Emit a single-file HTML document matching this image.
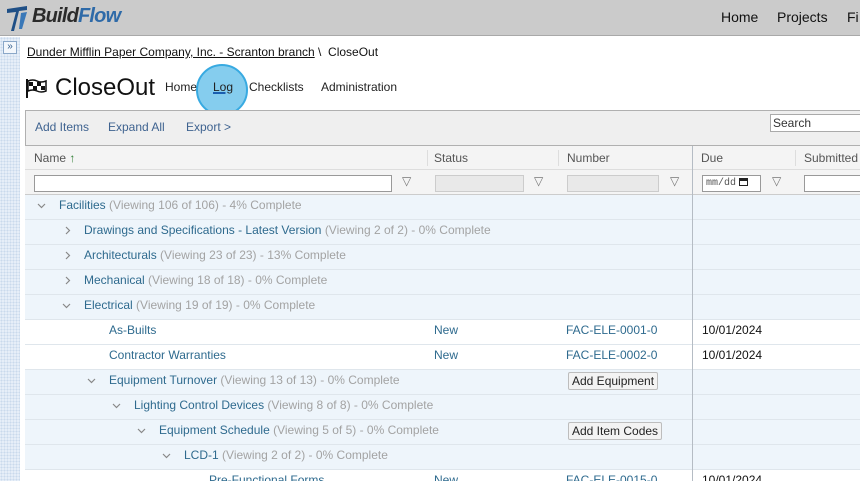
<!DOCTYPE html>
<html><head><meta charset="utf-8"><style>
*{box-sizing:border-box;margin:0;padding:0}
html,body{width:860px;height:481px;overflow:hidden}
body{background:#fff;font-family:"Liberation Sans",Arial,sans-serif;position:relative}
.a{position:absolute;white-space:nowrap}
#top{left:0;top:0;width:860px;height:36px;background:#cbcbcb;border-bottom:1px solid #a9a9a9}
#side{left:0;top:37px;width:20px;height:444px;background-color:#e6eef8;background-image:radial-gradient(#c9d9ec 0.8px,transparent 1px);background-size:3px 3px}
.row{position:absolute;left:25px;width:835px;height:25px;border-bottom:1px solid #dfe6ec;font-size:12px;line-height:20px}
.g{background:#eef5fb}
.w{background:#fff}
.lk{color:#2e6a8e}
.gr{color:#a3a3a3}
.ch{position:absolute;top:6px}
.vl{position:absolute;left:667px;top:0;width:1px;height:25px;background:#b5bcc4}
.btn{position:absolute;font-size:12px;line-height:16px;height:18px;top:2px;padding:0 3px;background:#f3f3f3;border:1px solid #bdbdbd;border-radius:2px;color:#222}
.hd{font-size:12px;color:#555}
</style></head><body>
<div class="a" id="top"></div>
<svg class="a" style="left:5px;top:4px" width="26" height="28" viewBox="0 0 26 28"><path d="M2 5 L22 2 L22 6 L14 7 L9 27 L6 27 L11 8 L2 9Z" fill="#1f4f86"/><path d="M16 9 L22 8 L17 25 L14 25Z" fill="#3a78b8"/></svg>
<div class="a" style="left:32px;top:5px;font-size:20px;font-weight:bold;font-style:italic;color:#2b2b2b;letter-spacing:-0.8px">Build<span style="color:#2e6aa8">Flow</span></div>
<div class="a" style="left:721px;top:9px;font-size:14px;color:#111">Home</div>
<div class="a" style="left:777px;top:9px;font-size:14px;color:#111">Projects</div>
<div class="a" style="left:847px;top:9px;font-size:14px;color:#111">Fi</div>
<div class="a" id="side"></div>
<div class="a" style="left:3px;top:41px;width:14px;height:13px;border:1px solid #8aa7c8;background:#f3f7fc;font-size:10px;line-height:10px;color:#2e5a8a;text-align:center">»</div>
<div class="a" style="left:27px;top:45px;font-size:12px;color:#111"><span style="text-decoration:underline">Dunder Mifflin Paper Company, Inc. - Scranton branch</span> \&nbsp; CloseOut</div>
<svg class="a" style="left:26px;top:79px" width="22" height="19" viewBox="0 0 22 19"><rect x="0" y="0" width="2" height="19" fill="#111"/><path d="M2 2 Q7 0 11 2 T20 2 L20 12 Q15 14 11 12 T2 12Z" fill="#fff" stroke="#111" stroke-width="1.5"/><rect x="3" y="3" width="4" height="4" fill="#111"/><rect x="11" y="3" width="4" height="4" fill="#111"/><rect x="7" y="7" width="4" height="4" fill="#111"/><rect x="15" y="7" width="4" height="4" fill="#111"/></svg>
<div class="a" style="left:55px;top:74px;font-size:24px;color:#111">CloseOut</div>
<div class="a" style="left:165px;top:80px;font-size:12px;color:#222">Home</div>
<div class="a" style="left:196px;top:64px;width:52px;height:52px;border-radius:50%;background:#7fcbee;border:2px solid #2ea6e0;opacity:.95"></div>
<div class="a" style="left:213px;top:80px;font-size:12px;color:#222;text-decoration:underline;text-decoration-color:#1a5fb0;text-decoration-thickness:2px">Log</div>
<div class="a" style="left:249px;top:80px;font-size:12px;color:#222">Checklists</div>
<div class="a" style="left:321px;top:80px;font-size:12px;color:#222">Administration</div>
<div class="a" style="left:25px;top:110px;width:835px;height:36px;background:#efefef;border:1px solid #b0b0b0;border-right:none"></div>
<div class="a" style="left:35px;top:120px;font-size:12px;color:#3f6390">Add Items</div>
<div class="a" style="left:108px;top:120px;font-size:12px;color:#3f6390">Expand All</div>
<div class="a" style="left:186px;top:120px;font-size:12px;color:#3f6390">Export &gt;</div>
<div class="a" style="left:770px;top:114px;width:95px;height:18px;border:1px solid #aaa;background:#fff;font-size:12px;line-height:16px;padding-left:2px;color:#333">Search</div>
<div class="a" style="left:25px;top:146px;width:835px;height:24px;background:#f4f4f4;border-bottom:1px solid #ddd"></div>
<div class="a hd" style="left:34px;top:151px">Name <span style="color:#2e7d32;font-weight:bold">↑</span></div>
<div class="a hd" style="left:434px;top:151px">Status</div>
<div class="a hd" style="left:567px;top:151px">Number</div>
<div class="a hd" style="left:701px;top:151px">Due</div>
<div class="a hd" style="left:804px;top:151px">Submitted</div>
<div class="a" style="left:427px;top:150px;width:1px;height:16px;background:#ddd"></div>
<div class="a" style="left:558px;top:150px;width:1px;height:16px;background:#ddd"></div>
<div class="a" style="left:795px;top:150px;width:1px;height:16px;background:#ddd"></div>
<div class="a" style="left:25px;top:170px;width:835px;height:25px;background:#f4f4f4;border-bottom:1px solid #ccc"></div>
<div class="a" style="left:34px;top:175px;width:358px;height:17px;border:1px solid #999;background:#fff"></div>
<div class="a" style="left:435px;top:175px;width:89px;height:17px;border:1px solid #ccc;background:#e9e9e9"></div>
<div class="a" style="left:567px;top:175px;width:92px;height:17px;border:1px solid #ccc;background:#e9e9e9"></div>
<div class="a" style="left:702px;top:175px;width:59px;height:17px;border:1px solid #999;background:#fff;font-size:10px;line-height:15px;padding-left:3px;color:#555;font-family:'Liberation Mono',monospace">mm/dd<span style="display:inline-block;width:9px;height:8px;border:1.5px solid #222;border-top-width:3px;margin-left:3px;vertical-align:-1px"></span></div>
<div class="a" style="left:804px;top:175px;width:60px;height:17px;border:1px solid #999;background:#fff"></div>
<div class="a" style="left:402px;top:174px;font-size:12px;color:#777">▽</div>
<div class="a" style="left:534px;top:174px;font-size:12px;color:#777">▽</div>
<div class="a" style="left:670px;top:174px;font-size:12px;color:#777">▽</div>
<div class="a" style="left:772px;top:174px;font-size:12px;color:#777">▽</div>
<div class="a" style="left:692px;top:146px;width:1px;height:49px;background:#b5bcc4"></div>

<div class="row g" style="top:195px"><svg class="ch" style="left:12px" width="9" height="9"><path d="M1 3 L4.5 6.5 L8 3" fill="none" stroke="#888" stroke-width="1.2"/></svg><span class="a" style="left:34px"><span class="lk">Facilities</span> <span class="gr">(Viewing 106 of 106) - 4% Complete</span></span><div class="vl"></div></div>
<div class="row g" style="top:220px"><svg class="ch" style="left:38px" width="9" height="9"><path d="M3 1 L6.5 4.5 L3 8" fill="none" stroke="#888" stroke-width="1.2"/></svg><span class="a" style="left:59px"><span class="lk">Drawings and Specifications - Latest Version</span> <span class="gr">(Viewing 2 of 2) - 0% Complete</span></span><div class="vl"></div></div>
<div class="row g" style="top:245px"><svg class="ch" style="left:38px" width="9" height="9"><path d="M3 1 L6.5 4.5 L3 8" fill="none" stroke="#888" stroke-width="1.2"/></svg><span class="a" style="left:59px"><span class="lk">Architecturals</span> <span class="gr">(Viewing 23 of 23) - 13% Complete</span></span><div class="vl"></div></div>
<div class="row g" style="top:270px"><svg class="ch" style="left:38px" width="9" height="9"><path d="M3 1 L6.5 4.5 L3 8" fill="none" stroke="#888" stroke-width="1.2"/></svg><span class="a" style="left:59px"><span class="lk">Mechanical</span> <span class="gr">(Viewing 18 of 18) - 0% Complete</span></span><div class="vl"></div></div>
<div class="row g" style="top:295px"><svg class="ch" style="left:37px" width="9" height="9"><path d="M1 3 L4.5 6.5 L8 3" fill="none" stroke="#888" stroke-width="1.2"/></svg><span class="a" style="left:59px"><span class="lk">Electrical</span> <span class="gr">(Viewing 19 of 19) - 0% Complete</span></span><div class="vl"></div></div>
<div class="row w" style="top:320px"><span class="a lk" style="left:84px">As-Builts</span><span class="a lk" style="left:409px">New</span><span class="a lk" style="left:541px">FAC-ELE-0001-0</span><span class="a" style="left:677px;color:#111">10/01/2024</span><div class="vl"></div></div>
<div class="row w" style="top:345px"><span class="a lk" style="left:84px">Contractor Warranties</span><span class="a lk" style="left:409px">New</span><span class="a lk" style="left:541px">FAC-ELE-0002-0</span><span class="a" style="left:677px;color:#111">10/01/2024</span><div class="vl"></div></div>
<div class="row g" style="top:370px"><svg class="ch" style="left:62px" width="9" height="9"><path d="M1 3 L4.5 6.5 L8 3" fill="none" stroke="#888" stroke-width="1.2"/></svg><span class="a" style="left:84px"><span class="lk">Equipment Turnover</span> <span class="gr">(Viewing 13 of 13) - 0% Complete</span></span><span class="btn" style="left:543px">Add Equipment</span><div class="vl"></div></div>
<div class="row g" style="top:395px"><svg class="ch" style="left:87px" width="9" height="9"><path d="M1 3 L4.5 6.5 L8 3" fill="none" stroke="#888" stroke-width="1.2"/></svg><span class="a" style="left:109px"><span class="lk">Lighting Control Devices</span> <span class="gr">(Viewing 8 of 8) - 0% Complete</span></span><div class="vl"></div></div>
<div class="row g" style="top:420px"><svg class="ch" style="left:112px" width="9" height="9"><path d="M1 3 L4.5 6.5 L8 3" fill="none" stroke="#888" stroke-width="1.2"/></svg><span class="a" style="left:134px"><span class="lk">Equipment Schedule</span> <span class="gr">(Viewing 5 of 5) - 0% Complete</span></span><span class="btn" style="left:543px">Add Item Codes</span><div class="vl"></div></div>
<div class="row g" style="top:445px"><svg class="ch" style="left:137px" width="9" height="9"><path d="M1 3 L4.5 6.5 L8 3" fill="none" stroke="#888" stroke-width="1.2"/></svg><span class="a" style="left:159px"><span class="lk">LCD-1</span> <span class="gr">(Viewing 2 of 2) - 0% Complete</span></span><div class="vl"></div></div>
<div class="row w" style="top:470px"><span class="a lk" style="left:184px">Pre-Functional Forms</span><span class="a lk" style="left:409px">New</span><span class="a lk" style="left:541px">FAC-ELE-0015-0</span><span class="a" style="left:677px;color:#111">10/01/2024</span><div class="vl"></div></div>
</body></html>
